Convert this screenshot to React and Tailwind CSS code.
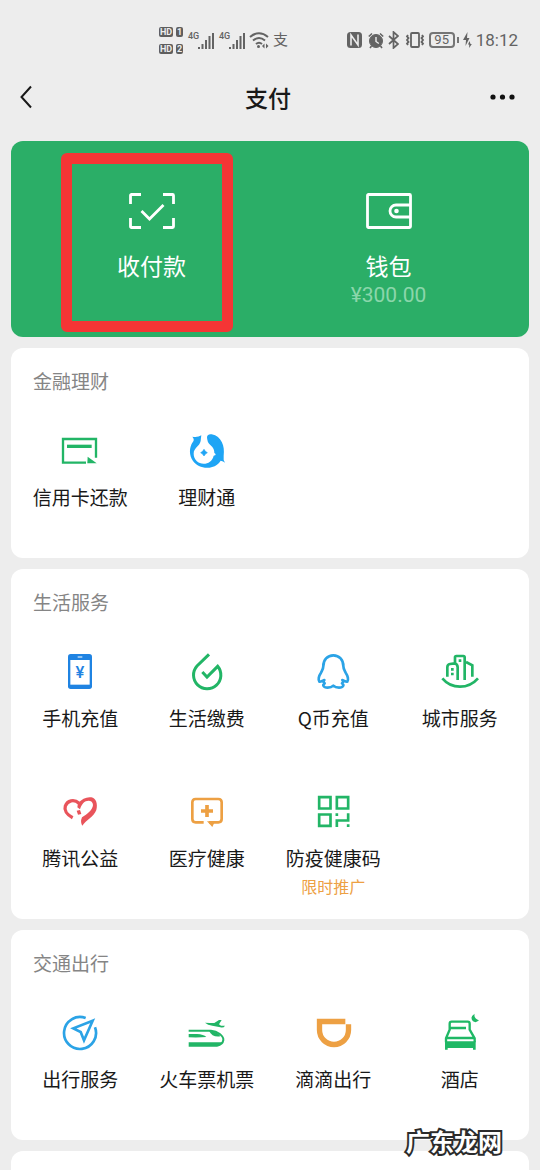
import React from "react";

const GREEN = "#22b566";
const BLUE = "#2ba3e6";
const ORANGE = "#eda043";

const sections = [
  {
    title: "金融理财",
    items: [
      { label: "信用卡还款", icon: CardIcon },
      { label: "理财通", icon: WealthIcon },
    ],
  },
  {
    title: "生活服务",
    items: [
      { label: "手机充值", icon: PhoneIcon },
      { label: "生活缴费", icon: UtilitiesIcon },
      { label: "Q币充值", icon: PenguinIcon },
      { label: "城市服务", icon: CityIcon },
      { label: "腾讯公益", icon: CharityIcon },
      { label: "医疗健康", icon: MedicalIcon },
      { label: "防疫健康码", icon: HealthCodeIcon, note: "限时推广" },
    ],
  },
  {
    title: "交通出行",
    items: [
      { label: "出行服务", icon: TravelIcon },
      { label: "火车票机票", icon: TrainIcon },
      { label: "滴滴出行", icon: DidiIcon },
      { label: "酒店", icon: HotelIcon },
    ],
  },
];

export default function App() {
  return (
    <div className="relative flex min-h-screen flex-col bg-[#ededed] font-['Noto_Sans_CJK_SC',sans-serif] text-[#191919]">
      <StatusBar />
      <header className="grid h-[34px] grid-cols-3 items-center pr-6 pl-5">
        <button type="button" aria-label="返回" className="justify-self-start">
          <svg className="h-6 w-3" viewBox="0 0 12 24" fill="none" stroke="#191919" strokeWidth="2">
            <path d="M11 1.5 1.5 12 11 22.5" />
          </svg>
        </button>
        <h1 className="text-center text-[23px] leading-8 font-medium">支付</h1>
        <button type="button" aria-label="更多" className="justify-self-end">
          <svg className="h-6 w-[26px]" viewBox="0 0 26 24" fill="#111">
            <circle cx="3" cy="12" r="2.6" />
            <circle cx="12.5" cy="12" r="2.6" />
            <circle cx="22" cy="12" r="2.6" />
          </svg>
        </button>
      </header>

      <main className="mt-[27px] flex grow flex-col gap-[11px] px-[11px]">
        <PayCard />
        {sections.map((section) => (
          <Section key={section.title} {...section} />
        ))}
        <section className="min-h-[19px] grow rounded-t-xl bg-white" />
      </main>

      <p className="absolute right-[38px] bottom-[13px] text-2xl leading-8 font-bold text-white [-webkit-text-stroke:4px_#2b2b2b] [paint-order:stroke] [stroke-linejoin:round]">
        广东龙网
      </p>
    </div>
  );
}

function StatusBar() {
  return (
    <div className="flex h-20 items-center justify-between pr-[22px] pl-[159px] font-[Roboto,'Noto_Sans_CJK_SC',sans-serif] text-[#636363]">
      <div className="flex items-center">
        <div className="flex flex-col gap-[7px]">
          <HdBadge sim="1" />
          <HdBadge sim="2" />
        </div>
        <Signal />
        <Signal />
        <svg className="ml-1 h-[18px] w-5" viewBox="0 0 20 18" fill="none" stroke="currentColor" strokeWidth="2">
          <path d="M1 6Q10-1.500 19 6M4 9.500Q10 4.500 16 9.500M7 13Q10 10.500 13 13" />
          <circle cx="9.500" cy="15.500" r="1.500" fill="currentColor" stroke="none" />
          <path d="m15.500 12.500-2.500 2.500 2.500 2.500zM17 12.500l2.500 2.500-2.500 2.500z" fill="currentColor" stroke="none" />
        </svg>
        <span className="ml-1 text-[15px] leading-5">支</span>
      </div>
      <div className="flex items-center">
        <svg className="h-4 w-[15px]" viewBox="0 0 15 16" fill="none">
          <rect width="15" height="16" rx="3.500" fill="currentColor" />
          <path d="M4 13.500V3L11 13V2.500" stroke="#ededed" strokeWidth="1.600" />
        </svg>
        <svg className="ml-1.5 h-[17px] w-4" viewBox="0 0 16 17" fill="none" stroke="currentColor">
          <circle cx="8" cy="9" r="6.500" fill="currentColor" />
          <path d="M.8 4.500 4 1.500M15.200 4.500 12 1.500M3.500 14 2 16M12.500 14 14 16" strokeWidth="1.600" />
          <path d="M8 5v4.500l2.800 2" stroke="#ededed" strokeWidth="1.400" />
        </svg>
        <svg className="ml-1 h-[18px] w-[11px]" viewBox="0 0 11 18" fill="none" stroke="currentColor" strokeWidth="1.700">
          <path d="m1 5 9 8-4.500 4V1L10 5l-9 8" />
        </svg>
        <svg className="ml-1.5 h-4 w-5" viewBox="0 0 20 16" fill="none" stroke="currentColor" strokeWidth="1.800">
          <rect x="6" y="1" width="8" height="14" rx="1" />
          <path d="m3 3-1 1.500L3.500 6 2 8l1.500 2L2 11.500 3 13M17 3l1 1.500L16.500 6 18 8l-1.500 2 1.500 1.500L17 13" />
        </svg>
        <span className="ml-1 flex h-4 w-[26px] items-center justify-center rounded-sm border-2 border-[#757575] text-[13px] leading-4">
          95
        </span>
        <span className="ml-0.5 h-1.5 w-0.5 bg-[#757575]" />
        <svg className="ml-1 h-4 w-[9px]" viewBox="0 0 9 16" fill="currentColor">
          <path d="M4.500 0 0 8h3l-.5 6 4-8H4zM6.500 9 5 12.500h1.200V16L8.800 12H7.500z" />
        </svg>
        <span className="ml-1 text-[17px] leading-5">18:12</span>
      </div>
    </div>
  );
}

function HdBadge({ sim }) {
  return (
    <div className="flex gap-[3px] text-[9px] leading-[10px] font-bold text-[#ededed]">
      <span className="w-3.5 rounded-xs bg-[#5e5e5e] text-center">HD</span>
      <span className="w-[7px] rounded-xs bg-[#5e5e5e] text-center">{sim}</span>
    </div>
  );
}

function Signal() {
  return (
    <div className="ml-[5px] flex items-start">
      <span className="w-2.5 text-[9px] leading-[9px] font-medium">4G</span>
      <svg className="h-[17px] w-4" viewBox="0 0 16 17" fill="currentColor">
        <path d="M0 15h2v2H0zM3.500 12h2v5h-2zM7 8h2v9H7zM10.500 4h2v13h-2zM14 1h2v16h-2z" />
      </svg>
    </div>
  );
}

function PayCard() {
  return (
    <section className="grid grid-cols-2 rounded-xl bg-[#2bae67] px-[22px] text-white">
      <button type="button" className="relative flex min-h-[196px] flex-col items-center pt-[52px]">
        <svg className="h-9 w-[46px]" viewBox="0 0 46 36" fill="none" stroke="currentColor" strokeWidth="2.800">
          <path d="M12 1.500H2.500a1 1 0 0 0-1 1V11M34 1.500h9.500a1 1 0 0 1 1 1V11M12 34.500H2.500a1 1 0 0 1-1-1V25M34 34.500h9.500a1 1 0 0 0 1-1V25" />
          <path d="m12.500 18 8 8L34.500 12" />
        </svg>
        <span className="mt-5 text-[23px] leading-8">收付款</span>
        <span className="absolute top-3 left-7 h-[179px] w-[172px] rounded-md border-[11px] border-[#f53535]" />
      </button>
      <button type="button" className="flex min-h-[196px] flex-col items-center pt-[52px]">
        <svg className="h-9 w-[46px]" viewBox="0 0 46 36" fill="none" stroke="currentColor" strokeWidth="2.800">
          <rect x="1.500" y="1.500" width="43" height="33" rx="1" />
          <path d="M44 12H30a6 6 0 0 0 0 12h14" />
          <circle cx="30.500" cy="18" r="2.300" fill="currentColor" stroke="none" />
        </svg>
        <span className="mt-5 text-[23px] leading-8">钱包</span>
        <span className="font-[Roboto,sans-serif] text-[21px] leading-7 text-[#8bd6ab]">¥300.00</span>
      </button>
    </section>
  );
}

function Section({ title, items }) {
  return (
    <section className="rounded-xl bg-white px-1.5 pt-[19px] pb-0.5">
      <h2 className="px-4 text-[19px] leading-7 font-normal text-[#858585]">{title}</h2>
      <div className="mt-[21px] grid grid-cols-4">
        {items.map((item) => (
          <ServiceItem key={item.label} {...item} />
        ))}
      </div>
    </section>
  );
}

function ServiceItem({ label, icon: Icon, note }) {
  return (
    <button type="button" className="flex min-h-[140px] flex-col items-center pt-[15px]">
      <Icon />
      <span className="mt-3 text-[19px] leading-7 whitespace-nowrap">{label}</span>
      {note && <span className="mt-1 text-base leading-5 text-[#eda043]">{note}</span>}
    </button>
  );
}

function IconBox({ color, width = 8, children }) {
  return (
    <svg className="size-10" viewBox="0 0 120 120" fill="none" stroke={color} strokeWidth={width} aria-hidden="true">
      {children}
    </svg>
  );
}

function CardIcon() {
  return (
    <IconBox color={GREEN} width={7}>
      <path d="M78 95H9V24h99v56" />
      <path d="M21 46h74" strokeWidth="10" />
      <path d="M83 77 110 97H82z" fill={GREEN} stroke="none" />
    </IconBox>
  );
}

function WealthIcon() {
  return (
    <IconBox color={BLUE}>
      <g fill="#1fa5f5" stroke="none">
        <path d="M43 13Q32 20 16 17Q24 26 17 34C6 50 6 74 18 90C32 110 66 118 90 101Q97 96 101 89Q109 90 114 95Q108 86 110 74C114 46 104 16 74 10Q62 8 60 18Q60 34 70 42C80 50 82 58 82 66Q86 68 86 72L80 74C76 90 64 98 50 98C34 98 20 86 20 68C20 50 38 46 41 30Q42 20 43 13z" />
        <path d="M51 55q3 7 10 10q-7 3-10 10q-3-7-10-10q7-3 10-10z" stroke="#1fa5f5" strokeWidth="2" />
      </g>
    </IconBox>
  );
}

function PhoneIcon() {
  return (
    <IconBox color="#1f83e2">
      <rect x="24" y="6" width="72" height="105" rx="8" fill="#1f83e2" stroke="none" />
      <path d="M31 24h58v74H31z" fill="#fff" stroke="none" />
      <path d="M53 15h14" stroke="#fff" strokeWidth="3" />
      <text
        x="60"
        y="79"
        textAnchor="middle"
        fill="#1f83e2"
        stroke="none"
        className="font-[Roboto,sans-serif] text-[50px] font-medium"
      >
        ¥
      </text>
    </IconBox>
  );
}

function UtilitiesIcon() {
  return (
    <IconBox color={GREEN} width={9}>
      <path d="M66 7 30 42A41 41 0 1 0 92 43L60 75 46 60" />
    </IconBox>
  );
}

function PenguinIcon() {
  return (
    <IconBox color={BLUE}>
      <path
        strokeLinejoin="round"
        d="M61 10C43 10 31 24 31 42C31 50 28 54 24 62C17 72 15 84 19 89C23 91 28 86 34 84C30 88 31 91 35 94C28 98 30 107 44 107C52 107 58 104 61 101C64 104 70 107 78 107C92 107 94 98 87 94C91 91 92 88 88 84C94 86 99 91 103 89C107 84 105 72 98 62C94 54 91 50 91 42C91 24 79 10 61 10z"
      />
    </IconBox>
  );
}

function CityIcon() {
  return (
    <IconBox color={GREEN} width={8}>
      <path d="M7 79Q28 104 60 104T114 79" />
      <path d="M22 74V46Q22 37 30 36L44 34Q53 37 53 46V84M45 37V16Q45 12 49 12H70Q74 12 74 16V84M78 30 97 40V74" />
      <path d="M56 26h8M33 52h8M33 66h8" />
    </IconBox>
  );
}

function CharityIcon() {
  return (
    <IconBox color="#e9545b">
      <path d="M38 77C20 68 12 54 16 42C22 26 42 20 57 34" strokeWidth="10" />
      <path
        fill="#e9545b"
        stroke="none"
        d="M54 34C66 20 80 14 94 16C108 18 114 36 109 54C102 74 78 84 67 101Q60 90 66 76C82 66 98 54 99 39C99 24 80 22 70 33C64 40 62 46 60 52L52 46z"
      />
      <path d="M50 56 60 54 64 66 54 68z" fill="#e9545b" stroke="none" />
    </IconBox>
  );
}

function MedicalIcon() {
  return (
    <IconBox color={ORANGE}>
      <path d="M50 91H26Q16 91 16 81V31Q16 21 26 21H94Q104 21 104 31V81Q104 91 94 91H66" />
      <path d="M60 88H84L76 105z" fill={ORANGE} stroke="none" />
      <path d="M60 39V75M42 57H78" strokeWidth="11" />
    </IconBox>
  );
}

function HealthCodeIcon() {
  return (
    <IconBox color={GREEN}>
      <path d="M18.500 15.500h34v34h-34zM71.500 15.500h34v34h-34zM18.500 67.500h34v34h-34z" />
      <path d="M71.500 64v8M71.500 105V85.500H105.500V64M105.500 97v8" />
    </IconBox>
  );
}

function TravelIcon() {
  return (
    <IconBox color={BLUE}>
      <path d="M77 15A48 48 0 1 0 105 43" />
      <path d="M98 23 40 46 62 57 72 82z" />
    </IconBox>
  );
}

function TrainIcon() {
  return (
    <IconBox color={GREEN} width={6}>
      <path d="M5 53H72C92 54 110 70 109 81Q107 94 92 97" />
      <g fill={GREEN} stroke="none">
        <path d="M5 88H105Q100 101 90 101H5z" />
        <path d="M5 63H30Q50 64 58 72Q40 74 5 73z" />
        <path d="M66 53Q94 56 100 70Q76 74 66 53z" />
        <path d="M54 29Q70 30 82 30L96 21H104L96 34 102 38 114 38Q110 46 100 43L76 38Q62 36 54 29z" />
      </g>
    </IconBox>
  );
}

function DidiIcon() {
  return (
    <IconBox color={ORANGE} width={16}>
      <path d="M97 25.500H19.500V51A43.500 43.500 0 0 0 106.500 51V34" />
    </IconBox>
  );
}

function HotelIcon() {
  return (
    <IconBox color="#1fb865" width={7}>
      <path d="M18 88V76L29 50V32Q29 26 35 26H83Q89 26 89 32V50L104 76V88M18 75H104M30 45H78" />
      <path d="M15 85H107V110H99V105H23V110H15z" fill="#1fb865" stroke="none" />
      <path d="M104 2Q100 16 117 22Q108 31 99 25Q88 12 104 2z" fill="#1fb865" stroke="none" />
    </IconBox>
  );
}
